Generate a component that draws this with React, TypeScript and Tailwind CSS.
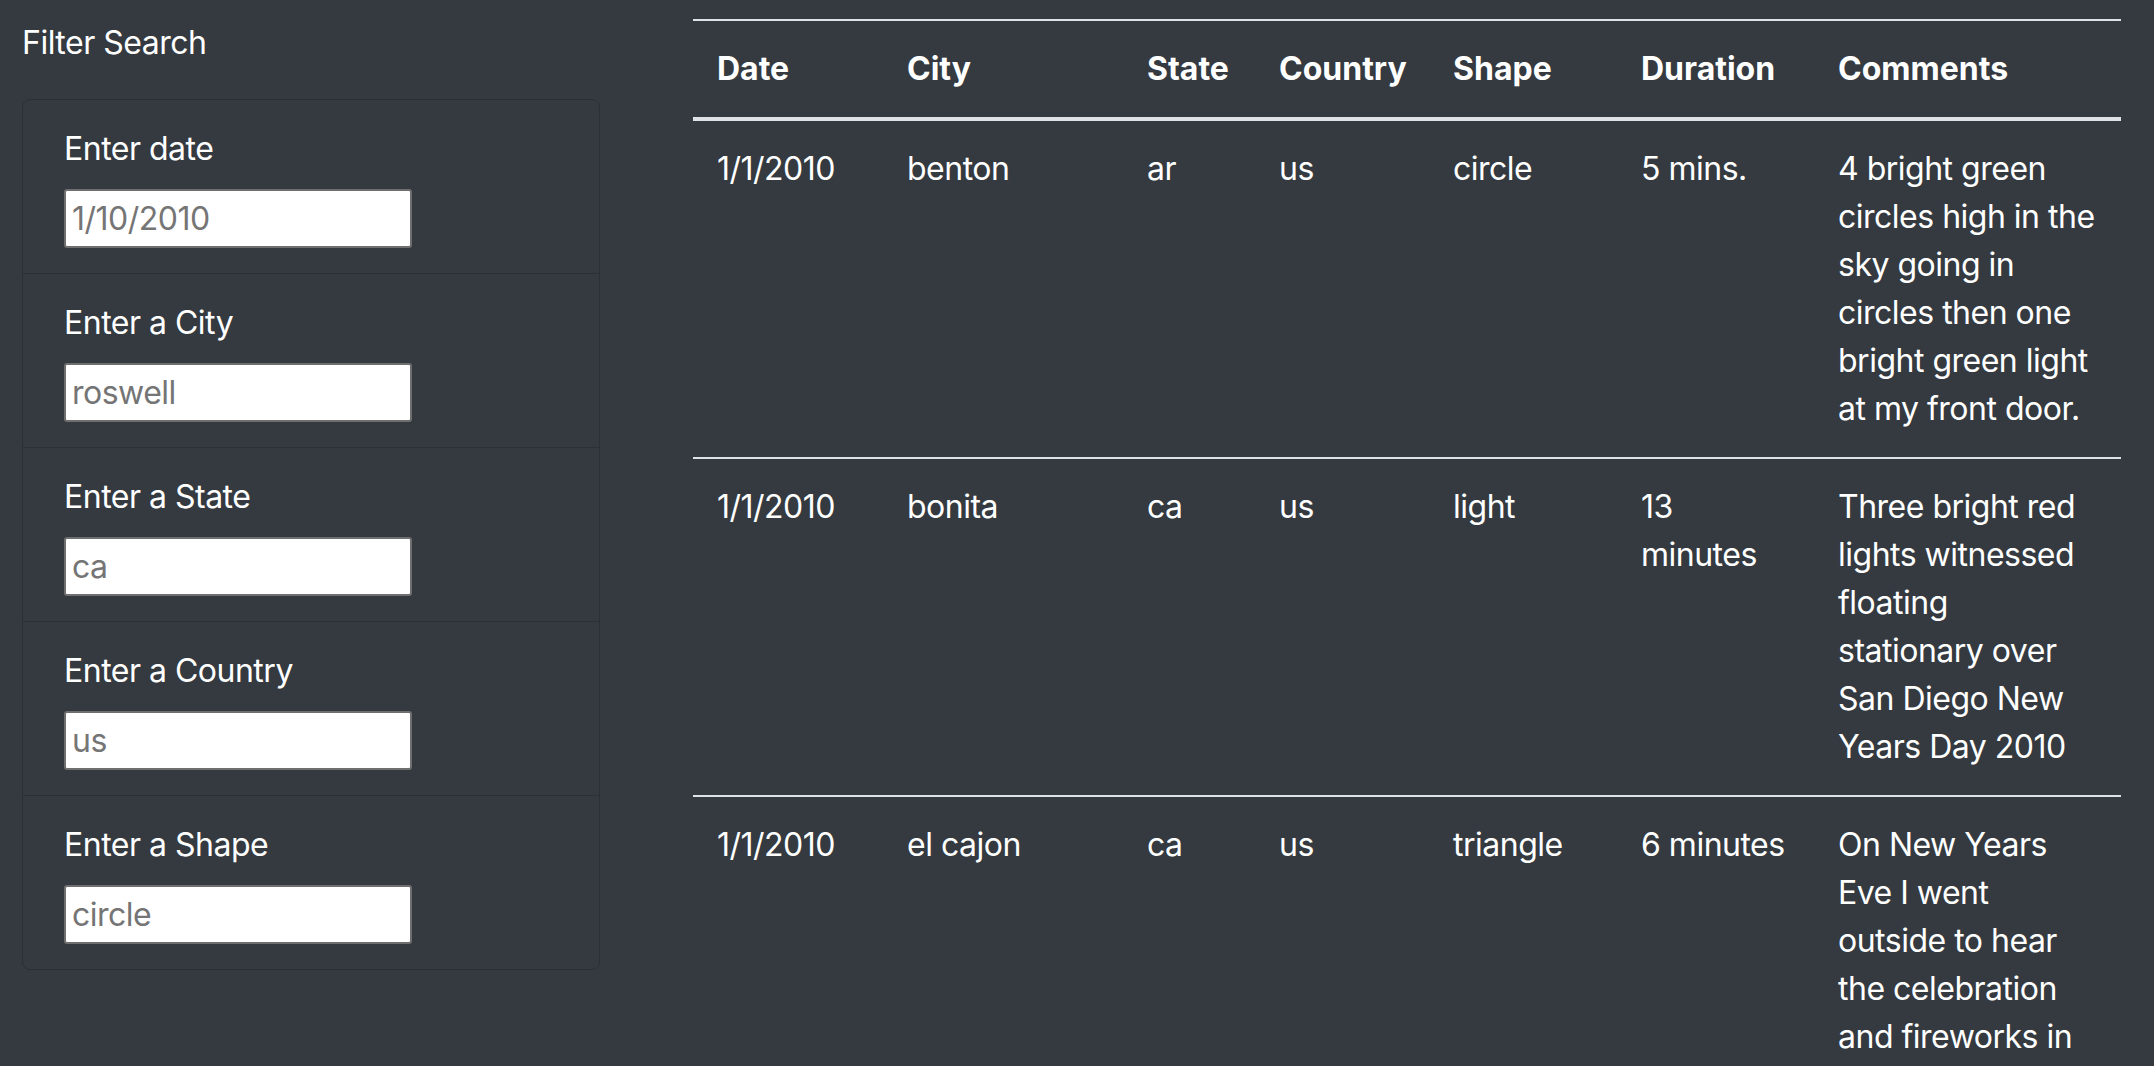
import React from 'react';

const filters = [
  { label: 'Enter date', placeholder: '1/10/2010' },
  { label: 'Enter a City', placeholder: 'roswell' },
  { label: 'Enter a State', placeholder: 'ca' },
  { label: 'Enter a Country', placeholder: 'us' },
  { label: 'Enter a Shape', placeholder: 'circle' },
];

const columns = [
  { name: 'Date', width: 'w-[190px]' },
  { name: 'City', width: 'w-[240px]' },
  { name: 'State', width: 'w-[132px]' },
  { name: 'Country', width: 'w-[174px]' },
  { name: 'Shape', width: 'w-[188px]' },
  { name: 'Duration', width: 'w-[197px]' },
  { name: 'Comments', width: 'w-[307px]' },
];

const sightings = [
  {
    date: '1/1/2010',
    city: 'benton',
    state: 'ar',
    country: 'us',
    shape: 'circle',
    duration: '5 mins.',
    comments: '4 bright green circles high in the sky going in circles then one bright green light at my front door.',
  },
  {
    date: '1/1/2010',
    city: 'bonita',
    state: 'ca',
    country: 'us',
    shape: 'light',
    duration: '13 minutes',
    comments: 'Three bright red lights witnessed floating stationary over San Diego New Years Day 2010',
  },
  {
    date: '1/1/2010',
    city: 'el cajon',
    state: 'ca',
    country: 'us',
    shape: 'triangle',
    duration: '6 minutes',
    comments: 'On New Years Eve I went outside to hear the celebration and fireworks in the neighborhood and saw three lights overhead.',
  },
];

export default function App() {
  return (
    <div className="flex h-screen overflow-hidden bg-[#343a40] font-['Inter',sans-serif] text-[32px] leading-[48px] tracking-[-0.5px] text-white">
      <aside className="w-[600px] shrink-0 pl-[22px] pt-[19px]">
        <h2 className="font-normal">Filter Search</h2>
        <ul className="mt-[32px] rounded-lg border border-[#2b3035]">
          {filters.map((f) => (
            <li key={f.label} className="border-b border-[#2b3035] px-[41px] py-[25px] last:border-b-0">
              <label className="mb-[16px] block">{f.label}</label>
              <input
                type="text"
                placeholder={f.placeholder}
                className="h-[59px] w-[348px] rounded-[3px] border-2 border-[#6f6f6f] bg-white px-[6px] text-[32px] tracking-[-0.5px] text-black placeholder:text-[#757575]"
              />
            </li>
          ))}
        </ul>
      </aside>
      <main className="ml-[93px] pt-[19px]">
        <table className="w-[1428px] table-fixed border-collapse">
          <thead>
            <tr className="border-t-2 border-b-4 border-[#dee2e6]">
              {columns.map((c) => (
                <th key={c.name} className={`${c.width} p-[24px] text-left font-bold tracking-normal`}>
                  {c.name}
                </th>
              ))}
            </tr>
          </thead>
          <tbody>
            {sightings.map((s, i) => (
              <tr key={i} className="border-b-2 border-[#dee2e6] align-top">
                <td className="p-[24px]">{s.date}</td>
                <td className="p-[24px]">{s.city}</td>
                <td className="p-[24px]">{s.state}</td>
                <td className="p-[24px]">{s.country}</td>
                <td className="p-[24px]">{s.shape}</td>
                <td className="p-[24px]">{s.duration}</td>
                <td className="p-[24px]">{s.comments}</td>
              </tr>
            ))}
          </tbody>
        </table>
      </main>
    </div>
  );
}
